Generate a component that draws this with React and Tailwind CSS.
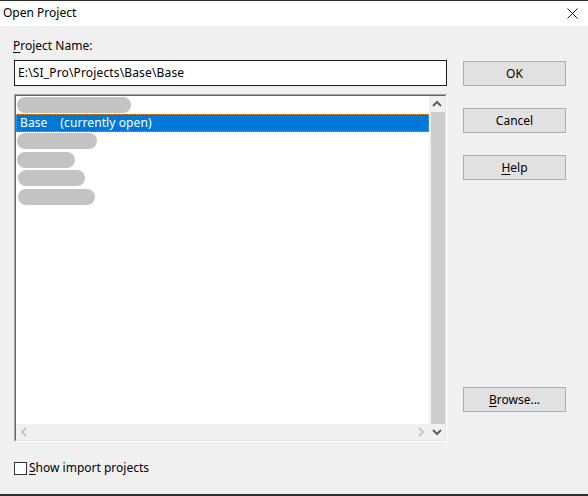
import React from 'react';

const font = { fontFamily: '"Noto Sans", "Liberation Sans", sans-serif' };

const pills = [
  { w: 'w-[114px]', ml: 'ml-[1px]', mt: 'mt-[1px]' },
  null,
  { w: 'w-[80px]', ml: 'ml-[1px]', mt: 'mt-[1px]' },
  { w: 'w-[58px]', ml: 'ml-[1px]', mt: 'mt-[2px]' },
  { w: 'w-[67px]', ml: 'ml-[2px]', mt: 'mt-[2px]' },
  { w: 'w-[77px]', ml: 'ml-[2px]', mt: 'mt-[3px]' },
];

const Chevron = ({ dir, color }) => {
  const pts = {
    up: '4,10 8,6 12,10',
    down: '4,6 8,10 12,6',
    left: '10,4 6,8 10,12',
    right: '6,4 10,8 6,12',
  }[dir];
  return (
    <svg width="16" height="16" viewBox="0 0 16 16">
      <polyline points={pts} fill="none" stroke={color} strokeWidth="2" />
    </svg>
  );
};

const Button = ({ children, className = '' }) => (
  <div
    className={`h-[25px] w-[103px] border border-[#adadad] bg-[#e1e1e1] flex items-center justify-center text-[12px] text-black ${className}`}
  >
    {children}
  </div>
);

export default function App() {
  return (
    <div style={font} className="w-[588px] h-[496px] flex flex-col bg-[#f0f0f0] overflow-hidden text-black">
      <div className="h-px bg-[#2d2d2d]" />
      {/* title bar */}
      <div className="h-[25px] bg-white flex items-center justify-between pl-[3px] pr-[10px]">
        <span className="text-[12px] leading-none -mt-px">Open Project</span>
        <svg width="11" height="11" viewBox="0 0 11 11">
          <path d="M0.5 0.5 L10.5 10.5 M10.5 0.5 L0.5 10.5" stroke="#111" strokeWidth="1" />
        </svg>
      </div>

      {/* body */}
      <div className="flex-1 flex">
        <div className="ml-[14px] w-[433px] flex flex-col">
          <div className="mt-[12px] h-[16px] leading-[16px] text-[12px] -ml-px">
            <span className="underline underline-offset-2">P</span>roject Name:
          </div>
          <div className="mt-[6px] h-[26px] border border-[#1e1e1e] bg-white flex items-center pl-[3px] text-[12px] tracking-[0.15px]">
            E:\SI_Pro\Projects\Base\Base
          </div>

          {/* list box */}
          <div className="mt-[8px] h-[348px] border border-t-[#a0a0a0] border-l-[#a0a0a0] border-r-white border-b-white">
            <div className="h-full flex border border-t-[#696969] border-l-[#696969] border-r-[#e3e3e3] border-b-[#e3e3e3] bg-white">
              <div className="flex-1 flex flex-col">
                <div className="flex-1 flex flex-col">
                  {pills.map((p, i) =>
                    p ? (
                      <div key={i} className="h-[18px]">
                        <div className={`${p.w} ${p.ml} ${p.mt} h-[16px] rounded-full bg-[#c3c3c3] blur-[0.4px]`} />
                      </div>
                    ) : (
                      <div
                        key={i}
                        className="h-[18px] bg-[#0078d7] text-white text-[12px] flex items-center pl-[3px] border border-dotted border-[#d88a2e] whitespace-pre tracking-[0.1px]"
                      >
                        Base    (currently open)
                      </div>
                    )
                  )}
                </div>
                <div className="h-[16px] bg-[#f0f0f0] flex items-center justify-between">
                  <Chevron dir="left" color="#c6c6c6" />
                  <Chevron dir="right" color="#c6c6c6" />
                </div>
              </div>
              <div className="w-[16px] bg-[#f0f0f0] flex flex-col">
                <Chevron dir="up" color="#606060" />
                <div className="flex-1 ml-[2px] bg-[#cdcdcd]" />
                <Chevron dir="down" color="#606060" />
              </div>
            </div>
          </div>

          <div className="mt-[17px] flex items-center text-[12px]">
            <div className="w-[13px] h-[13px] border border-[#333] bg-white" />
            <span className="ml-[2px]">
              <span className="underline underline-offset-2">S</span>how import projects
            </span>
          </div>
        </div>

        <div className="ml-[16px] flex flex-col">
          <Button className="mt-[35px]">OK</Button>
          <Button className="mt-[22px]">Cancel</Button>
          <Button className="mt-[22px]">
            <span><span className="underline underline-offset-2">H</span>elp</span>
          </Button>
          <Button className="mt-[207px]">
            <span><span className="underline underline-offset-2">B</span>rowse...</span>
          </Button>
        </div>
      </div>
      <div className="h-[2px] bg-[#2d2d2d]" />
    </div>
  );
}
